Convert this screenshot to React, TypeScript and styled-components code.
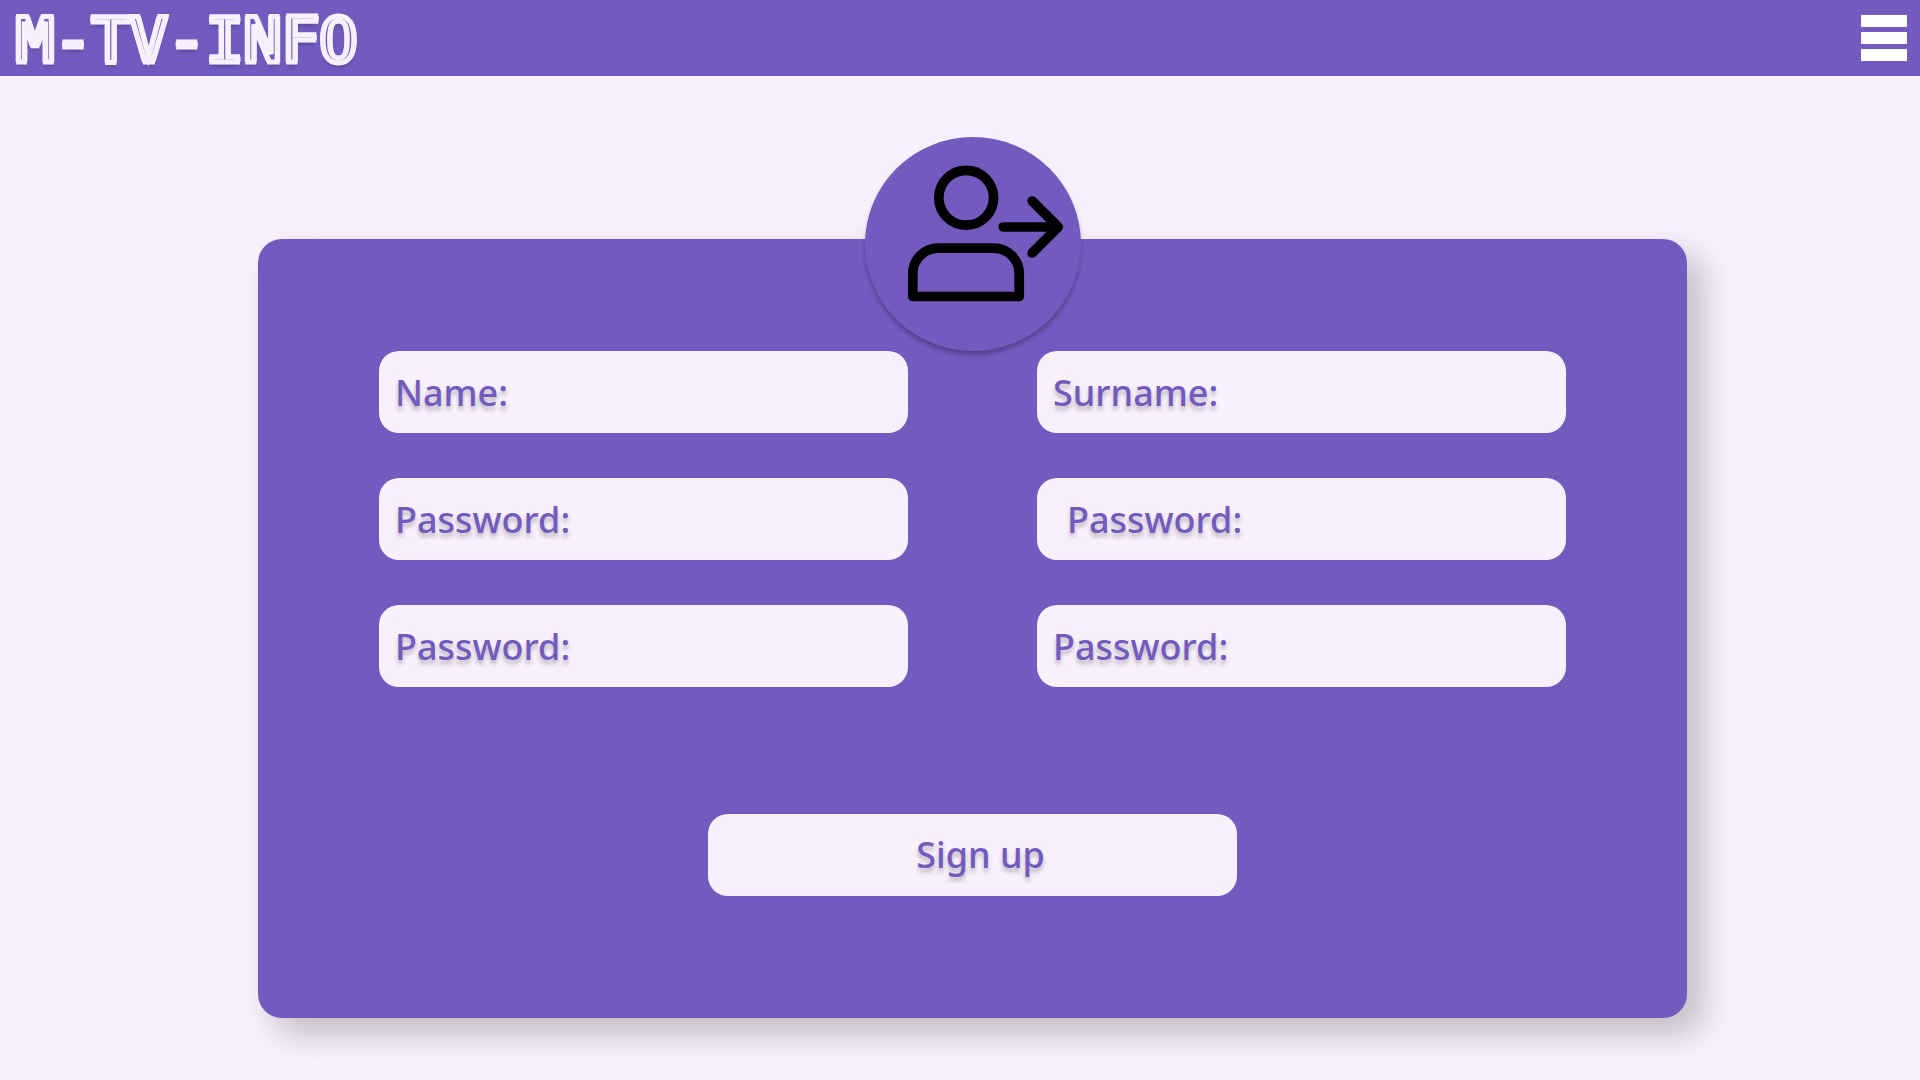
import React from "react";
import styled, { createGlobalStyle } from "styled-components";

const purple = "#735abf";
const lilac = "#f8f1fc";
const textShadow = "0 4px 4px rgba(0, 0, 0, 0.25)";

const GlobalStyle = createGlobalStyle`
  * { box-sizing: border-box; }
  body {
    margin: 0;
    background: ${lilac};
    color: ${purple};
    font-family: "Noto Sans", "Open Sans", sans-serif;
  }
`;

const Header = styled.header`
  display: flex;
  align-items: center;
  justify-content: space-between;
  height: 76px;
  padding: 0 13px 0 16px;
  background: ${purple};
`;

/* Inline lettering: the stroke leaves a hairline of the fill inside each stem. */
const Logo = styled.a`
  padding-top: 6px;
  color: ${purple};
  font-family: "DejaVu Sans Mono", monospace;
  font-size: 63px;
  line-height: 70px;
  text-decoration: none;
  -webkit-text-stroke: 5px ${lilac};
  text-shadow: 3px 0 ${lilac}, -3px 0 ${lilac}, ${textShadow};
`;

const MenuButton = styled.button`
  display: flex;
  flex-direction: column;
  gap: 5px;
  width: 46px;
  padding: 0;
  border: 0;
  background: none;
  cursor: pointer;
`;

const MenuBar = styled.span`
  height: 12px;
  background: #fff;
`;

const Main = styled.main`
  padding: 163px 233px 62px 258px;
`;

const Card = styled.form`
  position: relative;
  display: grid;
  grid-template-columns: repeat(2, minmax(0, 1fr));
  gap: 45px 129px;
  padding: 112px 121px 122px;
  border-radius: 24px;
  background: ${purple};
  box-shadow: 16px 16px 32px rgba(0, 0, 0, 0.22);
`;

const Badge = styled.div`
  position: absolute;
  top: -102px;
  left: 50%;
  width: 216px;
  height: 214px;
  margin-left: -108px;
  border-radius: 50%;
  background: ${purple};
  box-shadow: 0 4px 4px rgba(0, 0, 0, 0.25);
`;

const Field = styled.label<{ $inset?: number }>`
  display: flex;
  align-items: center;
  gap: 12px;
  height: 82px;
  padding: 0 16px 0 ${(p) => p.$inset ?? 16}px;
  border-radius: 20px;
  background: ${lilac};
  font-size: 36px;
  font-weight: 500;
  text-shadow: ${textShadow};
`;

const FieldInput = styled.input`
  flex: 1;
  min-width: 0;
  padding: 0;
  border: 0;
  outline: 0;
  background: transparent;
  color: inherit;
  font: inherit;
`;

const SubmitButton = styled.button`
  grid-column: 1 / -1;
  justify-self: center;
  width: calc(50% - 65px);
  height: 82px;
  margin-top: 82px;
  padding: 0 0 2px 16px;
  border: 0;
  border-radius: 20px;
  background: ${lilac};
  color: ${purple};
  font: inherit;
  font-size: 36px;
  font-weight: 500;
  text-shadow: ${textShadow};
  cursor: pointer;
`;

type FieldSpec = { id: string; label: string; type: string; inset?: number };

const fields: FieldSpec[] = [
  { id: "name", label: "Name:", type: "text" },
  { id: "surname", label: "Surname:", type: "text" },
  { id: "password-1", label: "Password:", type: "password" },
  { id: "password-2", label: "Password:", type: "password", inset: 30 },
  { id: "password-3", label: "Password:", type: "password" },
  { id: "password-4", label: "Password:", type: "password" },
];

function UserArrowIcon() {
  return (
    <svg
      width="216"
      height="214"
      viewBox="0 0 216 214"
      fill="none"
      stroke="#000"
      strokeWidth="9.7"
      strokeLinecap="round"
      strokeLinejoin="round"
      aria-hidden="true"
    >
      <circle cx="101.2" cy="60.8" r="27.4" />
      <path d="M47.8 159.5V136.5A25.4 25.4 0 0 1 73.2 111.1H128.8A25.4 25.4 0 0 1 154.2 136.5V159.5Z" />
      <path d="M138.2 90H193M167.2 64L193.2 90L167.2 116" />
    </svg>
  );
}

export default function App() {
  return (
    <>
      <GlobalStyle />
      <Header>
        <Logo href="#">M-TV-INFO</Logo>
        <MenuButton type="button" aria-label="Menu">
          <MenuBar />
          <MenuBar />
          <MenuBar />
        </MenuButton>
      </Header>
      <Main>
        <Card onSubmit={(e) => e.preventDefault()}>
          {fields.map((f) => (
            <Field key={f.id} htmlFor={f.id} $inset={f.inset}>
              {f.label}
              <FieldInput id={f.id} type={f.type} />
            </Field>
          ))}
          <SubmitButton type="submit">Sign up</SubmitButton>
          <Badge>
            <UserArrowIcon />
          </Badge>
        </Card>
      </Main>
    </>
  );
}
